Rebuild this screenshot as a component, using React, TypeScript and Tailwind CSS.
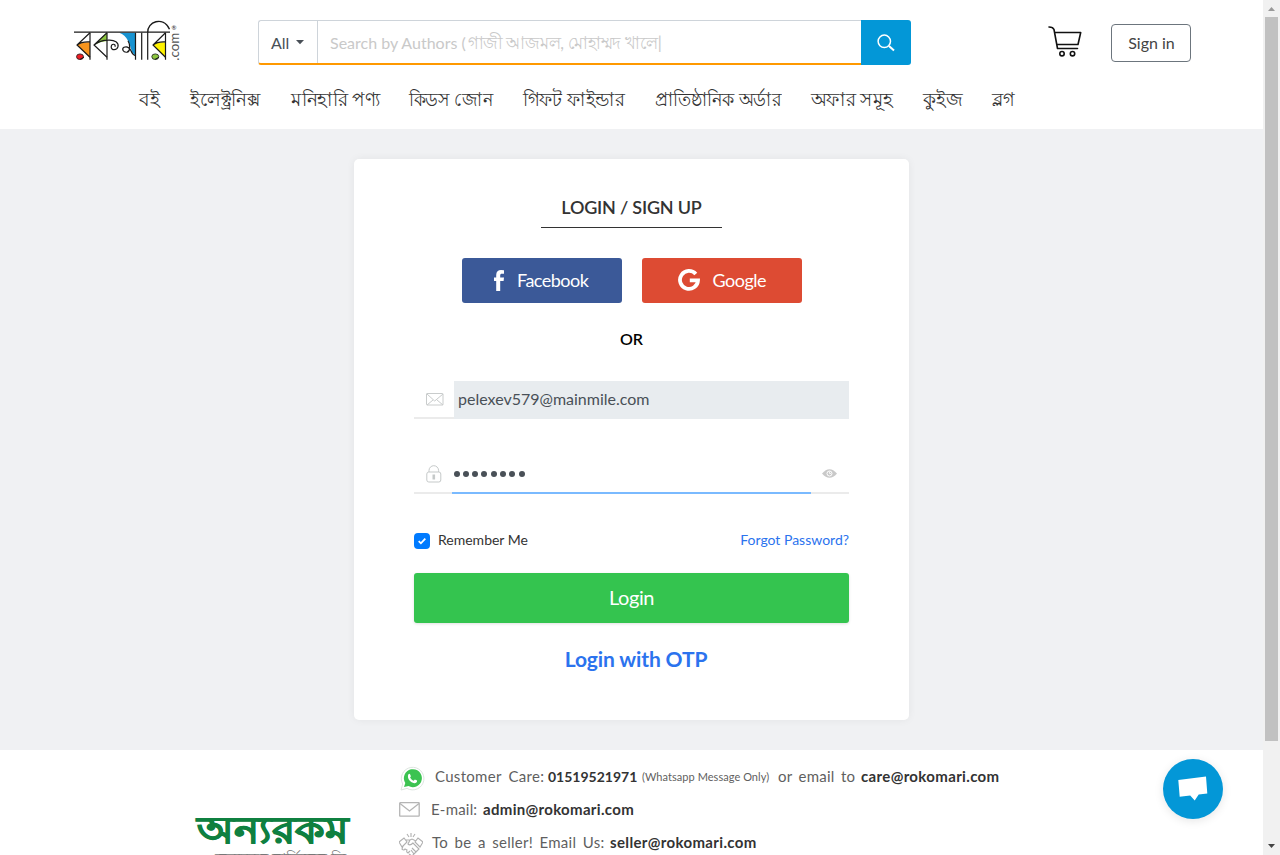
import React from "react";

const NAV = [
  { label: "বই", style: "w-[21px]" },
  { label: "ইলেক্ট্রনিক্স", style: "w-[71px] scale-x-[0.96]" },
  { label: "মনিহারি পণ্য", style: "w-[89px] scale-x-[0.97]" },
  { label: "কিডস জোন", style: "w-[84px] scale-x-[0.91]" },
  { label: "গিফট ফাইন্ডার", style: "w-[102px] scale-x-[0.95]" },
  { label: "প্রাতিষ্ঠানিক অর্ডার", style: "w-[126px] scale-x-[0.92]" },
  { label: "অফার সমূহ", style: "w-[82px] scale-x-[0.965]" },
  { label: "কুইজ", style: "w-[40px] scale-x-[0.98]" },
  { label: "ব্লগ", style: "w-[22px] scale-x-[0.93]" },
];

function Logo() {
  return (
    <svg width="110" height="42" viewBox="0 -0.7 110 42" className="block overflow-visible">
      <g stroke="none">
        <path d="M3 24.300 Q8 21 16 21.500 V37 Z" fill="#f7941d" />
        <path d="M25 19.500 L33 12 V20.500 Q27 20 21 24 Z" fill="#8cc63f" />
        <path d="M45.300 12 H61.500 V35 C56 31 57 24 54 20 Q51 14 45.300 12Z" fill="#1893d1" />
        <path d="M79 24.300 Q84 21 91.500 21.500 V37 Z" fill="#fff200" />
      </g>
      <g fill="none" stroke="#1a1a1a" strokeWidth="1.200">
        <path d="M0 11.500 H96" strokeWidth="1.300" />
        <path d="M16 12 V39 M33 12 V39 M61.500 12 V39 M67.700 12 V39 M73.700 12 V39 M91.500 12 V39" />
        <path d="M16 12 L3 24.300 L16 36.500 M3 24.300 Q8 20.500 16 21.200" />
        <path d="M33 12 L20 24.300 L33 36.500 M20 24.300 Q26 19.500 34 19.500 C41 19 45 22 44 26 C43 30 37 30 37.200 26 C37.500 22.500 42 23 41 26" />
        <path d="M54 20 C57 25 56 31 53 31.500 C49 32 47.500 28 50 26.500 C54 25 56 28 57 30 Q58.500 34 61.500 35" />
        <path d="M91.500 12 L79 24.300 L91.500 36.500 M79 24.300 Q84 20.500 91.500 21.200" />
        <path d="M73.700 12 C73 1 89 -5 95.500 8.500" strokeWidth="1.400" />
      </g>
      <ellipse cx="6" cy="36" rx="3.500" ry="2.800" fill="#ed1c24" stroke="#1a1a1a" strokeWidth=".8" />
      <path d="M6 38.700 L10 36.500" stroke="#1a1a1a" />
      <ellipse cx="81.300" cy="36" rx="3.500" ry="2.800" fill="#8cc63f" stroke="#1a1a1a" strokeWidth=".8" />
      <path d="M81 38.700 L85 36.500" stroke="#1a1a1a" />
      <text x="105" y="40" transform="rotate(-90 105 40)" fontFamily="Lato, sans-serif" fontSize="13" textLength="28" lengthAdjust="spacingAndGlyphs" fill="#555">.com</text>
      <text x="97.500" y="9" fontFamily="Lato, sans-serif" fontSize="6" fill="#222">®</text>
    </svg>
  );
}

function CartIcon() {
  return (
    <svg width="34" height="32" viewBox="0 0 34 32" fill="none" stroke="#111" strokeWidth="1.6" strokeLinecap="round" strokeLinejoin="round">
      <path d="M1 1 Q5 1 6 3.500 L9.500 22.500 H29.500 M6.500 6.500 H32.700 L30 18.500 H8.700" />
      <circle cx="14" cy="27.700" r="2.200" />
      <circle cx="24.500" cy="27.700" r="2.200" />
    </svg>
  );
}

function Header() {
  return (
    <header className="flex h-[129px] flex-col bg-white">
      <div className="flex h-[78px] items-start">
        <div className="ml-[74px] mt-5 w-[184px]"><Logo /></div>
        <div className="mt-5 flex h-[45px] w-[653px]">
          <div className="flex flex-1 rounded-l-[3px] border border-r-0 border-b-2 border-[#ced4da] border-b-[#f90]">
            <button className="flex w-[59px] items-center border-r border-[#ced4da] pl-3 pt-[2px] text-base leading-6 text-[#495057]">
              All
              <svg width="8" height="5" viewBox="0 0 8 5" className="mb-px ml-[7px]"><path d="M0 0h8L4 4.300z" fill="#495057" /></svg>
            </button>
            <div className="flex items-center whitespace-nowrap pl-3 text-base text-[#c9c9c9]">
              <span className="w-[138px] pt-[2px]">Search by Authors (</span>
              <span className="origin-left scale-x-[0.9] text-[18px] leading-6">গাজী আজমল, মোহাম্মদ খালে|</span>
            </div>
          </div>
          <button className="flex w-[50px] items-center justify-center rounded-r-[3px] bg-[#0397d7]">
            <svg width="18" height="18" viewBox="0 0 18 18" fill="none" stroke="#fff"><circle cx="7.300" cy="7.300" r="6.200" strokeWidth="1.500" /><path d="M12 12l5 4.500" strokeWidth="2" /></svg>
          </button>
        </div>
        <div className="ml-[137px] mt-[26px] w-[63px]"><CartIcon /></div>
        <button className="mt-6 h-[38px] w-20 rounded border border-[#6c757d] pl-px text-base leading-6 text-[#444]">Sign in</button>
      </div>
      <nav className="ml-[139px] flex gap-[29.8px] pt-[7px]">
        {NAV.map((n) => (
          <a key={n.label} className={`${n.style} shrink-0 origin-left whitespace-nowrap text-[19px] leading-7 text-[#333]`}>{n.label}</a>
        ))}
      </nav>
    </header>
  );
}

function LoginCard() {
  return (
    <section className="mt-[30px] flex h-[561px] w-[555px] flex-col items-center rounded-[5px] bg-white px-[60px] shadow-[0_0_8px_rgba(0,0,0,0.06)]">
      <h1 className="mt-[30px] h-[39px] w-[181px] border-b border-[#333] pt-1 text-center text-[18px] font-semibold leading-[28px] tracking-[-0.2px] text-[#333]">LOGIN / SIGN UP</h1>
      <div className="mt-[30px] flex gap-5 text-[18px] tracking-[-0.5px] text-white">
        <button className="flex h-[45px] w-40 items-center rounded-[3px] bg-[#3b5998] pl-8">
          <svg width="10" height="21" viewBox="0 0 10 21" className="mr-[13.5px]"><path d="M10 .2v3.500H8c-1.400 0-1.800.7-1.800 1.700v2H10l-.4 3.500H6.200V21H2.200V10.900H0V7.400h2.200V5C2.200 1.700 4.100 0 7.100 0z" fill="#fff" /></svg>
          Facebook
        </button>
        <button className="flex h-[45px] w-40 items-center rounded-[3px] bg-[#dd4b33] pl-9">
          <svg width="22" height="22" viewBox="0 0 22 22" className="mb-px mr-[13px]"><path d="M17.800 5A9 9 0 1 0 20 11.300H11.800" fill="none" stroke="#fff" strokeWidth="3.800" /></svg>
          Google
        </button>
      </div>
      <div className="mt-6 text-base font-semibold leading-6 text-black">OR</div>
      <div className="mt-[30px] flex h-[38px] w-full">
        <div className="flex w-10 items-center justify-center border-b-2 border-[#ebebeb] pl-[2px]">
          <svg width="18" height="13" viewBox="0 0 18 13" fill="none" stroke="#c9cccc"><rect x=".5" y=".5" width="16.500" height="11.500" rx=".5" /><path d="M1 1l7.700 7L17 1M1 12l6-5M17 12l-6-5" /></svg>
        </div>
        <div className="flex flex-1 items-center bg-[#e8ecef] pb-[2px] pl-1 text-base text-[#495057]">pelexev579@mainmile.com</div>
      </div>
      <div className="mt-[37px] flex h-[38px] w-full">
        <div className="flex w-[38px] items-center justify-center border-b-2 border-[#ebebeb] pb-px pl-[2px]">
          <svg width="16" height="18" viewBox="0 0 16 18" fill="none" stroke="#c5c9c9"><rect x=".8" y="7" width="14" height="10" rx="2" /><path d="M3 7V5.500a4.800 4.800 0 0 1 9.600 0V7" /><rect x="7" y="10" width="1.600" height="4" fill="#c5c9c9" /></svg>
        </div>
        <div className="flex w-[359px] items-center gap-[3.3px] border-b-2 border-[#7abaff] pl-[1.5px]">
          {Array.from({ length: 8 }).map((_, i) => <i key={i} className="h-1.5 w-1.5 rounded-full bg-[#495057]" />)}
        </div>
        <div className="flex w-[38px] items-center justify-center border-b-2 border-[#ebebeb] pb-[2px] pr-[2px]">
          <svg width="15" height="9" viewBox="0 0 15 9"><path d="M0 4.500Q7.500-4.200 15 4.500Q7.500 13.200 0 4.500z" fill="#c9c9c9" /><circle cx="7.500" cy="4.500" r="2.500" fill="none" stroke="#fff" /><path d="M7.500 2.500v2H9" fill="none" stroke="#fff" strokeWidth=".8" /></svg>
        </div>
      </div>
      <div className="mt-9 flex h-5 w-full items-center text-sm text-[#333]">
        <span className="mr-2 mt-px flex h-4 w-4 items-center justify-center rounded bg-[#007bff]"><svg width="8" height="8" viewBox="0 0 8 8"><path d="M.7 4.200l2.200 2.100L7.300 1.600" fill="none" stroke="#fff" strokeWidth="1.800" /></svg></span>
        Remember Me
        <a className="ml-auto text-[#2b73ee]">Forgot Password?</a>
      </div>
      <button className="mt-[23px] h-[50px] w-full rounded-[3px] bg-[#34c44f] pb-[2px] text-[20px] tracking-[-0.4px] text-white shadow-[0_1px_3px_rgba(0,0,0,0.12)]">Login</button>
      <a className="mt-5 pl-[9px] text-[21px] font-bold leading-8 tracking-[-0.12px] text-[#2b73ee]">Login with OTP</a>
    </section>
  );
}

function Footer() {
  return (
    <footer className="flex h-[105px] overflow-hidden bg-white">
      <div className="ml-[197px] w-[202px] shrink-0 pt-[58px]">
        <div className="h-[37px] w-max origin-left scale-x-[1.115] whitespace-nowrap text-[38px] font-bold leading-[40px] text-[#0f8040] [-webkit-text-stroke:0.8px_#0f8040]">অন্যরকম</div>
        <div className="whitespace-nowrap pl-[18px] pt-[3px] text-[15px] leading-5 text-[#777]">অন্যরকম সার্ভিসেস লি</div>
      </div>
      <div className="flex flex-col whitespace-nowrap pt-[10px] text-[15px] leading-[33px] text-[#5f5f5f]">
        <div className="flex h-[33px] items-center whitespace-pre">
          <svg width="26" height="26" viewBox="0 0 26 26" className="mt-1 mr-[10px]">
            <path d="M2 24l1.700-6A11.300 11.300 0 1 1 8 22.400z" fill="#fff" stroke="#dde5e0" />
            <path d="M5 21l1.300-4A9 9 0 1 1 9.500 20z" fill="#3cc351" />
            <path d="M9.300 8.500c.8-1 1.500-.8 1.900 0l.7 1.700-.8 1.300c.8 1.600 2 2.500 3.500 3.200l1.300-1.200 2.200 1.100c.2 2-1.400 2.700-2.800 2.600-3.600-.5-7.600-4.700-6-8.700z" fill="#fff" />
          </svg>
          <span className="w-[113px] tracking-[0.3px] [word-spacing:3px]">Customer Care:</span>
          <b className="w-[93px] text-[14px] text-[#333]">01519521971</b>
          <span className="w-[137px] pl-px text-[11px] tracking-[0.05px]">(Whatsapp Message Only)</span>
          <span className="w-[83px] tracking-[0.25px] [word-spacing:2.3px]">or email to</span>
          <b className="tracking-[0.35px] text-[#333]">care@rokomari.com</b>
        </div>
        <div className="flex h-[33px] items-center">
          <svg width="21" height="15" viewBox="0 0 21 15" className="mr-[11px]" fill="none" stroke="#b5b5b5" strokeWidth="1.300"><rect x=".7" y=".7" width="19.500" height="13.500" rx=".5" /><path d="M1 1.500l9.500 7.500L20 1.500" /></svg>
          <span className="w-[52px] tracking-[0.2px]">E-mail:</span><b className="tracking-[0.32px] text-[#333]">admin@rokomari.com</b>
        </div>
        <div className="flex h-[33px] items-center">
          <svg width="24" height="24" viewBox="0 0 24 24" className="mr-[9px] mt-1" fill="none" stroke="#b0b0b0" strokeWidth="1.100"><path d="M8 1l2 3M12 0v4M16 1l-2 3M0 9l5-4 3 4-5 5zM24 9l-5-4-3 4 5 5zM7 7h4l2-1 4 2M11 7l-2 4q2 2 5-1l6 6-3 3-4-4M18 18l-3 3-3-4M15 21l-2 2-3-2M4 13l-1 3q2 2 3 0l2 1q-1 2 1 3l2-2" /></svg>
          <span className="w-[178px] tracking-[0.25px] [word-spacing:2.5px]">To be a seller! Email Us:</span><b className="tracking-[0.35px] text-[#333]">seller@rokomari.com</b>
        </div>
      </div>
    </footer>
  );
}

function Scrollbar() {
  return (
    <div className="flex w-[17px] shrink-0 flex-col items-center justify-between bg-[#f1f1f1]">
      <div className="flex w-full flex-col items-center">
        <svg width="7" height="4" viewBox="0 0 7 4" className="mt-[7px]"><path d="M3.500 0L7 4H0z" fill="#999" /></svg>
        <div className="mt-[6px] h-[724px] w-[13px] bg-[#c1c1c1]" />
      </div>
      <svg width="7" height="4" viewBox="0 0 7 4" className="mb-[7px]"><path d="M0 0h7L3.500 4z" fill="#444" /></svg>
    </div>
  );
}

export default function App() {
  return (
    <div className="relative flex h-[855px] w-[1280px] overflow-hidden bg-white font-[Lato,sans-serif]">
      <div className="flex w-[1263px] shrink-0 flex-col">
        <Header />
        <main className="flex h-[621px] justify-center bg-[#f0f1f3]"><LoginCard /></main>
        <Footer />
      </div>
      <Scrollbar />
      <button className="absolute left-[1163px] top-[759px] flex h-[60px] w-[60px] items-center justify-center rounded-full bg-[#0397d7] shadow-[0_2px_10px_rgba(0,0,0,0.1)]">
        <svg width="30" height="26" viewBox="0 0 30 26"><path d="M.3 4L28 .6l1.300 16.900-8.600 1.100-4 6-4.500-5.100-10.500 1.300z" fill="#fff" /></svg>
      </button>
    </div>
  );
}
